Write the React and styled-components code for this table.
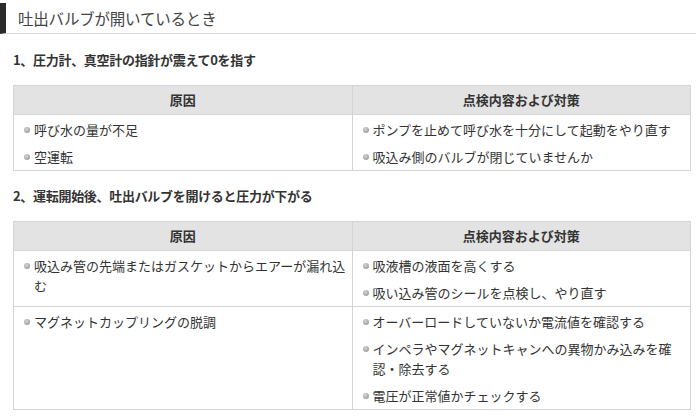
import React from "react";
import styled, { createGlobalStyle } from "styled-components";

const Global = createGlobalStyle`
  html, body { margin: 0; padding: 0; background: #fff; }
  body {
    font-family: "Noto Sans CJK JP", "Noto Sans", sans-serif;
    color: #333;
    font-size: 13px;
  }
`;

const Page = styled.div`
  width: 696px;
  padding-top: 3px;
`;

const Title = styled.h2`
  margin: 0;
  height: 30px;
  display: flex;
  align-items: center;
  padding-left: 12px;
  border-left: 6px solid #2b2b2b;
  border-bottom: 1px solid #d8d8d8;
  font-size: 15.5px;
  font-weight: 400;
  color: #444;
  letter-spacing: -0.2px;
`;

const Section = styled.section`
  padding: 0 5px 0 13px;
`;

const SubHeading = styled.h3`
  margin: ${(p) => p.$top}px 0 0;
  font-size: 13px;
  line-height: 20px;
  font-weight: 700;
  color: #333;
  letter-spacing: -0.3px;
`;

const Table = styled.table`
  width: 678px;
  margin-top: 15px;
  border-collapse: collapse;
  table-layout: fixed;
  border: 1px solid #d4d4d4;
`;

const Th = styled.th`
  background: #e3e3e3;
  border: 1px solid #d4d4d4;
  padding: 4px 10px 4px;
  font-size: 13px;
  line-height: 20px;
  font-weight: 700;
  color: #333;
  text-align: center;
`;

const Td = styled.td`
  border: 1px solid #d4d4d4;
  padding: 5px 5px 3px 9px;
  vertical-align: top;
`;

const List = styled.ul`
  margin: 0;
  padding: 0;
  list-style: none;
  display: flex;
  flex-direction: column;
  gap: 7px;
`;

const Item = styled.li`
  position: relative;
  padding-left: 11px;
  font-size: 13px;
  line-height: 20px;
  color: #333;

  &::before {
    content: "";
    position: absolute;
    left: 1px;
    top: 7px;
    width: 6px;
    height: 6px;
    border-radius: 50%;
    background: radial-gradient(circle at 40% 35%, #d6d6d6 0%, #a8a8a8 60%, #8e8e8e 100%);
  }
`;

const Cell = ({ items }) => (
  <Td>
    <List>
      {items.map((t) => (
        <Item key={t}>{t}</Item>
      ))}
    </List>
  </Td>
);

const DataTable = ({ rows }) => (
  <Table>
    <colgroup>
      <col style={{ width: "50%" }} />
      <col style={{ width: "50%" }} />
    </colgroup>
    <thead>
      <tr>
        <Th>原因</Th>
        <Th>点検内容および対策</Th>
      </tr>
    </thead>
    <tbody>
      {rows.map((r, i) => (
        <tr key={i}>
          <Cell items={r[0]} />
          <Cell items={r[1]} />
        </tr>
      ))}
    </tbody>
  </Table>
);

export default function App() {
  return (
    <Page>
      <Global />
      <Title>吐出バルブが開いているとき</Title>
      <Section>
        <SubHeading $top={16}>1、圧力計、真空計の指針が震えて0を指す</SubHeading>
        <DataTable
          rows={[
            [
              ["呼び水の量が不足", "空運転"],
              ["ポンプを止めて呼び水を十分にして起動をやり直す", "吸込み側のバルブが閉じていませんか"],
            ],
          ]}
        />
        <SubHeading $top={15}>2、運転開始後、吐出バルブを開けると圧力が下がる</SubHeading>
        <DataTable
          rows={[
            [
              ["吸込み管の先端またはガスケットからエアーが漏れ込む"],
              ["吸液槽の液面を高くする", "吸い込み管のシールを点検し、やり直す"],
            ],
            [
              ["マグネットカップリングの脱調"],
              [
                "オーバーロードしていないか電流値を確認する",
                "インペラやマグネットキャンへの異物かみ込みを確認・除去する",
                "電圧が正常値かチェックする",
              ],
            ],
          ]}
        />
      </Section>
    </Page>
  );
}
